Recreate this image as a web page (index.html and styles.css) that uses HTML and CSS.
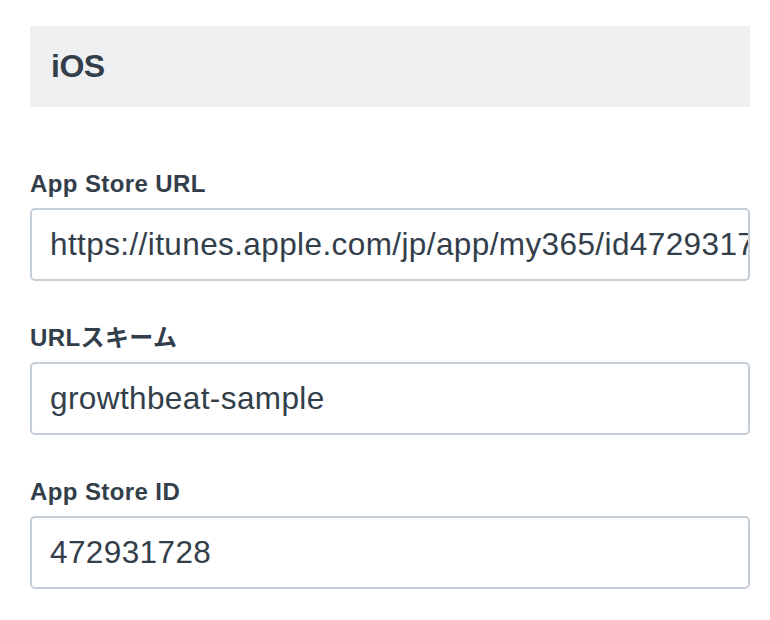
FILE: index.html
```html
<!DOCTYPE html>
<html lang="ja">
<head>
<meta charset="utf-8">
<title>iOS</title>
<link rel="stylesheet" href="styles.css">
</head>
<body>
<div class="page">
  <div class="section-head">iOS</div>
  <div class="field first">
    <label class="label">App Store URL</label>
    <div class="input">https://itunes.apple.com/jp/app/my365/id472931728</div>
  </div>
  <div class="field">
    <label class="label">URLスキーム</label>
    <div class="input">growthbeat-sample</div>
  </div>
  <div class="field">
    <label class="label">App Store ID</label>
    <div class="input">472931728</div>
  </div>
</div>
</body>
</html>
```
FILE: styles.css
```css
html, body {
  margin: 0;
  padding: 0;
  background: #ffffff;
}
body {
  font-family: "Liberation Sans", "Noto Sans CJK JP", sans-serif;
  color: #333e4b;
}
.page {
  width: 720px;
  padding: 26px 20px 0 30px;
}
.section-head {
  height: 81px;
  line-height: 81px;
  background: #eff0f2;
  padding-left: 21px;
  font-size: 32px;
  font-weight: bold;
  letter-spacing: -0.5px;
}
.field {
  margin-top: 42px;
}
.field.first {
  margin-top: 62px;
}
.label {
  display: block;
  font-size: 24px;
  font-weight: bold;
  letter-spacing: 0.4px;
  line-height: 30px;
  margin-bottom: 9px;
}
.input {
  box-sizing: border-box;
  height: 73px;
  border: 2px solid #c6ced7;
  border-radius: 5px;
  padding: 0 18px;
  line-height: 69px;
  font-size: 31.5px;
  letter-spacing: 0.4px;
  white-space: nowrap;
  overflow: hidden;
}
```
